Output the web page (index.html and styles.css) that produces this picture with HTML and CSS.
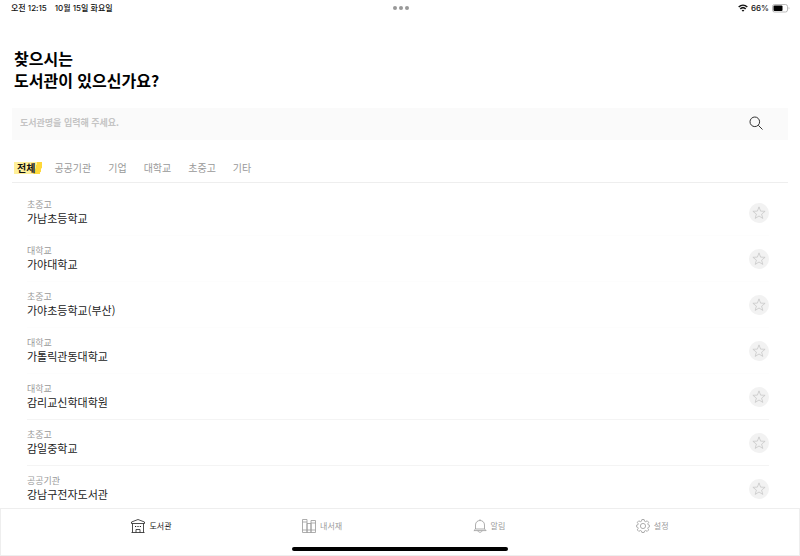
FILE: index.html
```
<!DOCTYPE html>
<html lang="ko">
<head>
    <meta charset="UTF-8">
    <meta name="viewport" content="width=device-width, initial-scale=1.0">
    <title>도서관 찾기</title>
    <link rel="stylesheet" href="styles.css">
</head>
<body>
    <!-- shared star icon -->
    <svg class="sprite" width="0" height="0" aria-hidden="true">
        <symbol id="star" viewBox="0 0 14 14">
            <path d="M7 .9l1.600 4.200 4.500.2-3.500 2.800 1.200 4.300L7 10l-3.800 2.400 1.200-4.300L.9 5.300l4.500-.2z" fill="none" stroke="#c8c8c8" stroke-width=".8" stroke-linejoin="round"/>
        </symbol>
    </svg>

    <header class="status-bar">
        <div class="status-left"><span>오전 12:15</span><span>10월 15일 화요일</span></div>
        <div class="dots"><i></i><i></i><i></i></div>
        <div class="status-right">
            <svg width="10" height="8" viewBox="0 0 10 8" fill="none" stroke="#111" stroke-width="1.5">
                <path d="M.7 3C3.200.6 6.800.6 9.300 3"/>
                <path d="M2.300 4.900c1.500-1.400 3.900-1.400 5.400 0"/>
                <path d="M5 7.800L3.600 6.200c.8-.7 2-.7 2.800 0z" fill="#111" stroke="none"/>
            </svg>
            <span>66%</span>
            <svg width="18" height="9" viewBox="0 0 18 9">
                <rect x=".5" y=".5" width="15" height="7.500" rx="2" fill="#fff" stroke="#aaa" stroke-width=".8"/>
                <rect x="1.500" y="1.500" width="9" height="5.500" rx="1" fill="#000"/>
                <path d="M16.700 3v2.600c.9-.3.9-2.300 0-2.600z" fill="#aaa"/>
            </svg>
        </div>
    </header>

    <main class="content">
        <h1 class="title">찾으시는<br>도서관이 있으신가요?</h1>

        <form class="search">
            <input class="search-input" type="text" placeholder="도서관명을 입력해 주세요." aria-label="도서관명">
            <button class="search-btn" type="button" aria-label="검색">
                <svg width="14" height="14" viewBox="0 0 14 14" fill="none" stroke="#333" stroke-width="1">
                    <circle cx="5.800" cy="5.800" r="4.800"/>
                    <path d="M9.300 9.300l4.200 4.200"/>
                </svg>
            </button>
        </form>

        <div class="tabs">
            <button class="tab active" type="button">전체</button>
            <button class="tab" type="button">공공기관</button>
            <button class="tab" type="button">기업</button>
            <button class="tab" type="button">대학교</button>
            <button class="tab" type="button">초중고</button>
            <button class="tab" type="button">기타</button>
        </div>

        <ul class="list">
            <li class="row">
                <div><p class="type">초중고</p><p class="name">가남초등학교</p></div>
                <button class="fav" type="button" aria-label="즐겨찾기"><svg width="14" height="14"><use href="#star"/></svg></button>
            </li>
            <li class="row">
                <div><p class="type">대학교</p><p class="name">가야대학교</p></div>
                <button class="fav" type="button" aria-label="즐겨찾기"><svg width="14" height="14"><use href="#star"/></svg></button>
            </li>
            <li class="row">
                <div><p class="type">초중고</p><p class="name">가야초등학교(부산)</p></div>
                <button class="fav" type="button" aria-label="즐겨찾기"><svg width="14" height="14"><use href="#star"/></svg></button>
            </li>
            <li class="row">
                <div><p class="type">대학교</p><p class="name">가톨릭관동대학교</p></div>
                <button class="fav" type="button" aria-label="즐겨찾기"><svg width="14" height="14"><use href="#star"/></svg></button>
            </li>
            <li class="row line">
                <div><p class="type">대학교</p><p class="name">감리교신학대학원</p></div>
                <button class="fav" type="button" aria-label="즐겨찾기"><svg width="14" height="14"><use href="#star"/></svg></button>
            </li>
            <li class="row line">
                <div><p class="type">초중고</p><p class="name">감일중학교</p></div>
                <button class="fav" type="button" aria-label="즐겨찾기"><svg width="14" height="14"><use href="#star"/></svg></button>
            </li>
            <li class="row">
                <div><p class="type">공공기관</p><p class="name">강남구전자도서관</p></div>
                <button class="fav" type="button" aria-label="즐겨찾기"><svg width="14" height="14"><use href="#star"/></svg></button>
            </li>
        </ul>
    </main>

    <footer class="bottom">
        <nav class="nav">
            <a class="nav-item active" href="#">
                <svg width="14" height="14" viewBox="0 0 14 14" fill="none" stroke="currentColor" stroke-width=".8">
                    <path d="M.5 4.500V3L7 .5 13.500 3v1.500zM1.500 4.500v9M12.500 4.500v9M.5 13.500h13"/>
                    <path d="M5 13.500v-3h4v3"/>
                    <path d="M4 7.500h1.200M6.400 7.500h1.200M8.800 7.500H10" stroke-width="1.200"/>
                </svg>
                도서관
            </a>
            <a class="nav-item" href="#">
                <svg width="14" height="14" viewBox="0 0 14 14" fill="none" stroke="currentColor" stroke-width=".8">
                    <path d="M.5.500h4.500v13H.5zM.5 3h4.500M.5 11h4.500M5 4.500h4v9H5zM5 11h4M9 1.500h4.500v12H9zM9 4h4.500M9 11h4.500"/>
                </svg>
                내서재
            </a>
            <a class="nav-item" href="#">
                <svg width="14" height="14" viewBox="0 0 14 14" fill="none" stroke="currentColor" stroke-width=".8">
                    <path d="M7 .3v1.200M2.500 10V6c0-6 9-6 9 0v4l1.600 1.600H.9zM2.500 10h9M5 11.800c.3 2 3.700 2 4 0"/>
                </svg>
                알림
            </a>
            <a class="nav-item" href="#">
                <svg width="14" height="14" viewBox="0 0 14 14" fill="none" stroke="currentColor" stroke-width=".8" stroke-linejoin="round">
                    <path d="M5.900.5h2.200l.4 1.700 1.200.5 1.500-.9 1.500 1.500-.9 1.500.5 1.200 1.300.3v1.500l-1.300.4-.5 1.200.9 1.500-1.500 1.500-1.500-.9-1.200.5-.4 1.500H5.900l-.4-1.500-1.200-.5-1.500.9-1.500-1.500.9-1.500-.5-1.200L.4 7.800V6.300L1.700 6l.5-1.200-.9-1.500 1.500-1.500 1.500.9 1.200-.5z"/>
                    <circle cx="7" cy="7" r="2.600"/>
                </svg>
                설정
            </a>
        </nav>
        <div class="home-bar"></div>
    </footer>
</body>
</html>
```
FILE: styles.css
```
* {
    box-sizing: border-box;
}
body {
    margin: 0;
    height: 100vh;
    display: flex;
    flex-direction: column;
    overflow: hidden;
    background: #fff;
    color: #111;
    font-family: "Noto Sans CJK KR", sans-serif;
}
button, input {
    font-family: inherit;
    border: 0;
    padding: 0;
    background: none;
}
button {
    cursor: pointer;
}
svg {
    display: block;
}
.sprite {
    position: absolute;
}

/* status bar */
.status-bar {
    display: grid;
    grid-template-columns: 1fr auto 1fr;
    align-items: center;
    padding: 0 10px 0 11px;
    font-family: Inter, "Noto Sans CJK KR", sans-serif;
    font-size: 8px;
    line-height: 16px;
    font-weight: 500;
}
.status-left {
    display: flex;
    gap: 8px;
}
.dots {
    display: flex;
    gap: 2px;
}
.dots i {
    width: 4px;
    height: 4px;
    border-radius: 50%;
    background: #999;
}
.status-right {
    display: flex;
    justify-content: flex-end;
    align-items: center;
    gap: 3px;
}

.content {
    flex: 1;
    min-height: 0;
    overflow: hidden;
    padding: 31px 12px 0;
}
.title {
    margin: 0 2px;
    font-size: 16px;
    line-height: 22px;
    font-weight: 700;
    color: #000;
}
.search {
    display: flex;
    align-items: center;
    height: 32px;
    margin-top: 17px;
    padding: 0 25px 3px 8px;
    background: #fafafa;
}
.search-input {
    flex: 1;
    min-width: 0;
    font-size: 9px;
    font-weight: 700;
    outline: none;
}
.search-input::placeholder {
    color: #c4c4c4;
}

/* tabs */
.tabs {
    display: flex;
    align-items: center;
    gap: 17px;
    height: 43px;
    padding: 14px 2px 0;
    border-bottom: 1px solid #eee;
}
.tab {
    font-size: 10px;
    line-height: 12px;
    color: #999;
}
.tab.active {
    padding: 0 7px 0 3px;
    margin-right: -5px;
    font-weight: 700;
    color: #111;
    background: linear-gradient(105deg, #fff09a 74%, #ffd83a 75%, #ffd83a 93%, transparent 94%);
}

/* library list */
.list {
    list-style: none;
    margin: 0;
    padding: 7px 19px 0 15px;
}
.row {
    display: flex;
    justify-content: space-between;
    align-items: center;
    height: 46px;
    border-bottom: 1px solid #fdfdfd;
}
.row.line {
    border-bottom-color: #f4f4f4;
}
.row p {
    margin: 0;
}
.type {
    font-size: 9px;
    line-height: 12px;
    color: #999;
}
.name {
    font-size: 11px;
    line-height: 15px;
    color: #222;
}
.fav {
    display: grid;
    place-items: center;
    width: 20px;
    height: 20px;
    border-radius: 50%;
    background: #f2f2f2;
}

/* bottom navigation */
.bottom {
    height: 48px;
    display: flex;
    flex-direction: column;
    align-items: center;
    border: 1px solid #eee;
    background: #fff;
}
.nav {
    width: 100%;
    display: flex;
    justify-content: space-evenly;
    padding-top: 9px;
}
.nav-item {
    display: flex;
    align-items: center;
    gap: 4px;
    font-size: 8px;
    line-height: 16px;
    color: #999;
    text-decoration: none;
}
.nav-item.active {
    color: #222;
}
.home-bar {
    width: 27%;
    height: 4px;
    margin-top: 13px;
    border-radius: 2px;
    background: #000;
}
```
